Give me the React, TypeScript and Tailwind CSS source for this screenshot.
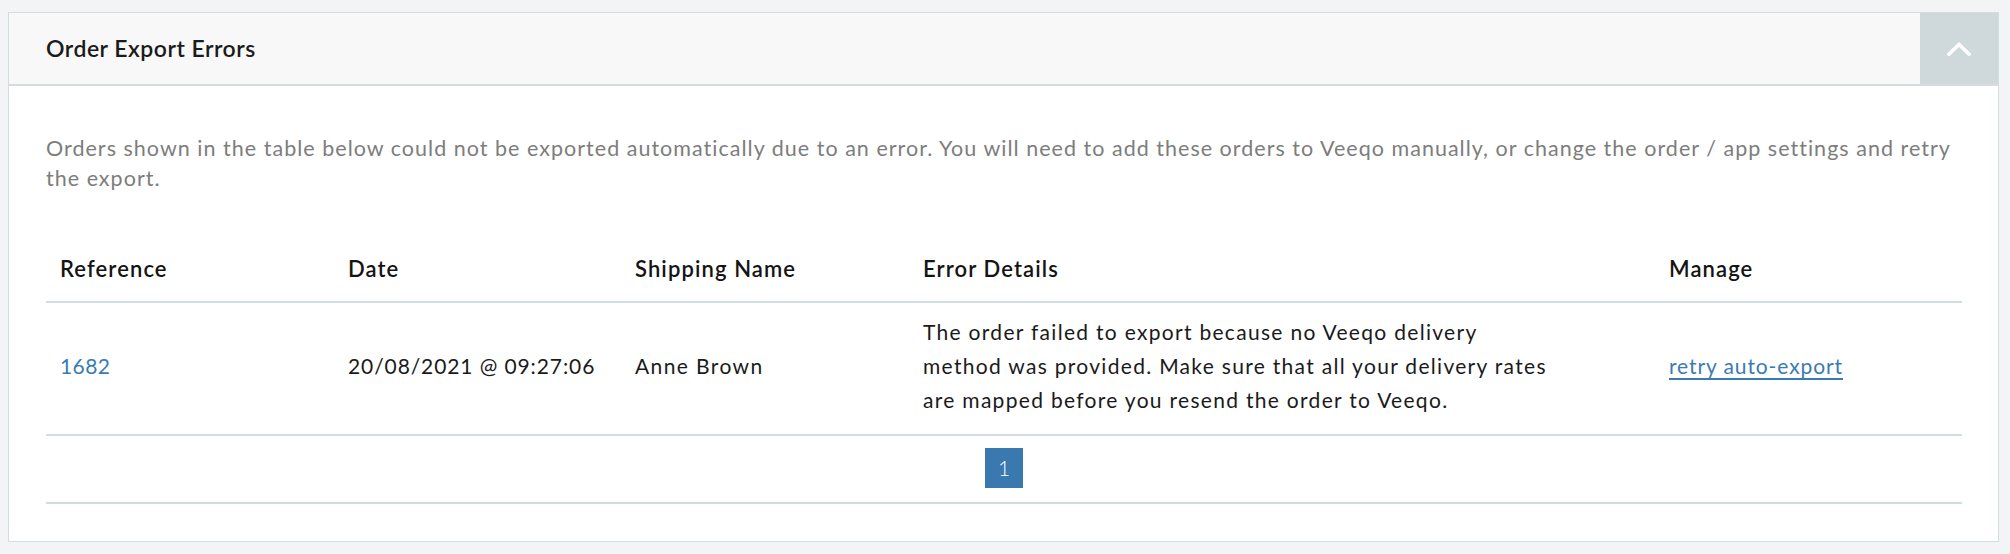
import React from "react";

const font = { fontFamily: "Lato, 'Open Sans', sans-serif" };

export default function App() {
  return (
    <div
      className="min-h-[554px] w-full bg-[#f2f4f5] pt-[12px] pl-[8px] pr-[11px] pb-[13px]"
      style={font}
    >
      <div className="border border-[#d3dcdf] bg-white">
        {/* Header */}
        <div className="flex h-[73px] border-b-2 border-[#d3dcdf] bg-[#f8f8f8]">
          <div className="flex flex-1 items-center pl-[37px] text-[23px] font-semibold tracking-[0.5px] text-[#1b1b1b]">
            Order Export Errors
          </div>
          <button className="flex w-[78px] items-center justify-center bg-[#cfd9dc]">
            <svg width="24" height="14" viewBox="0 0 24 14" fill="none">
              <polyline
                points="2,12 12,2.5 22,12"
                stroke="#ffffff"
                strokeWidth="3.6"
                strokeLinecap="square"
                strokeLinejoin="miter"
              />
            </svg>
          </button>
        </div>

        {/* Body */}
        <div className="pl-[37px] pr-[36px] pt-[47px] pb-[37px]">
          <p className="text-[21.5px] leading-[30px] tracking-[1.02px] text-[#7d7d7d]">
            Orders shown in the table below could not be exported automatically due to an error. You will need to add
            these orders to Veeqo manually, or change the order / app settings and retry
            <br />
            the export.
          </p>

          <table className="mt-[44px] w-full table-fixed border-collapse text-[21px] leading-[34px] tracking-[0.9px]">
            <colgroup>
              <col className="w-[288px]" />
              <col className="w-[287px]" />
              <col className="w-[288px]" />
              <col className="w-[746px]" />
              <col />
            </colgroup>
            <thead>
              <tr className="border-b-2 border-[#d3dcdf] text-left text-[22px] tracking-[1.1px] text-[#141414]">
                <th className="px-[14px] pt-[15px] pb-[15px] font-semibold">Reference</th>
                <th className="px-[14px] pt-[15px] pb-[15px] font-semibold">Date</th>
                <th className="px-[14px] pt-[15px] pb-[15px] font-semibold">Shipping Name</th>
                <th className="px-[14px] pt-[15px] pb-[15px] font-semibold">Error Details</th>
                <th className="px-[14px] pt-[15px] pb-[15px] font-semibold">Manage</th>
              </tr>
            </thead>
            <tbody>
              <tr className="border-b-2 border-[#d3dcdf] align-middle text-[#1a1a1a]">
                <td className="px-[14px] pt-[12px] pb-[17px] tracking-[0.4px]">
                  <a className="text-[#3a7bb3]">1682</a>
                </td>
                <td className="px-[14px] pt-[12px] pb-[17px] whitespace-nowrap">20/08/2021 @ 09:27:06</td>
                <td className="px-[14px] pt-[12px] pb-[17px] tracking-[1.4px]">Anne Brown</td>
                <td className="px-[14px] pt-[12px] pb-[17px] whitespace-nowrap tracking-[1.3px]">
                  The order failed to export because no Veeqo delivery
                  <br />
                  method was provided. Make sure that all your delivery rates
                  <br />
                  are mapped before you resend the order to Veeqo.
                </td>
                <td className="px-[14px] pt-[12px] pb-[17px]">
                  <a className="text-[#3a7bb3] underline decoration-[1.5px] underline-offset-[4px]">
                    retry auto-export
                  </a>
                </td>
              </tr>
            </tbody>
          </table>

          <div className="flex justify-center border-b-2 border-[#d3dcdf] pt-[12px] pb-[14px]">
            <span className="flex h-[40px] w-[38px] items-center justify-center bg-[#3979b0] text-[21px] font-light text-white">
              1
            </span>
          </div>
        </div>
      </div>
    </div>
  );
}
